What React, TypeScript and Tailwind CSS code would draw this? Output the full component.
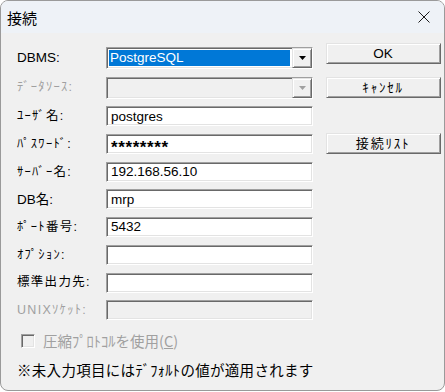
import React from 'react'

const ui = "font-['Liberation_Sans','Noto_Sans_CJK_JP',sans-serif]"
const jp = "font-['Noto_Sans_CJK_JP',sans-serif]"

// classic 3D edges
const sunken =
  'border border-t-[#a0a0a0] border-l-[#a0a0a0] border-b-white border-r-white shadow-[inset_1px_1px_0_#696969,inset_-1px_-1px_0_#e3e3e3]'
const raised =
  'border border-t-[#e3e3e3] border-l-[#e3e3e3] border-b-[#696969] border-r-[#696969] shadow-[inset_1px_1px_0_#ffffff,inset_-1px_-1px_0_#a0a0a0]'

function Label({ text, disabled, kana }: { text: string; disabled?: boolean; kana?: boolean }) {
  return (
    <span
      className={`w-[89px] shrink-0 leading-none ${ui} ${kana ? 'text-[12.5px] tracking-[1.3px]' : 'text-[13.5px]'} ${
        disabled ? 'text-[#a0a0a0]' : 'text-black'
      }`}
    >
      {text}
    </span>
  )
}

function Arrow({ disabled }: { disabled?: boolean }) {
  return (
    <svg width="7" height="4" viewBox="0 0 7 4" aria-hidden="true">
      <path d="M0 0h7L3.5 4z" fill={disabled ? '#a0a0a0' : '#000'} />
    </svg>
  )
}

function Combo({ value, disabled }: { value?: string; disabled?: boolean }) {
  return (
    <div className={`h-[22px] w-[207px] flex ${sunken} ${disabled ? 'bg-[#f0f0f0]' : 'bg-white'}`}>
      <div className="flex-1 p-[2px]">
        {value && (
          <div className={`h-full bg-[#0078d7] text-white text-[13.5px] leading-none flex items-center pl-[1px] ${ui}`}>
            {value}
          </div>
        )}
      </div>
      <div className={`w-[20px] h-full flex items-center justify-center bg-[#f0f0f0] ${raised}`}>
        <Arrow disabled={disabled} />
      </div>
    </div>
  )
}

function Field({ value, disabled, secret }: { value?: string; disabled?: boolean; secret?: boolean }) {
  return (
    <div
      className={`h-[20px] w-[207px] flex items-center pl-[4px] text-black leading-none ${ui} ${sunken} ${
        disabled ? 'bg-[#f0f0f0]' : 'bg-white'
      }`}
    >
      {secret ? (
        <span className="relative top-[3px] text-[17px] font-bold tracking-[0.6px]">{value}</span>
      ) : (
        <span className="text-[13.5px]">{value}</span>
      )}
    </div>
  )
}

function Button({ text, kana }: { text: string; kana?: boolean }) {
  return (
    <div
      className={`h-[21px] w-[115px] flex items-center justify-center bg-[#f0f0f0] text-black leading-none ${ui} ${raised} ${
        kana ? 'text-[13px] tracking-[1.8px]' : 'text-[13.5px]'
      }`}
    >
      {text}
    </div>
  )
}

const rows: { label: string; value?: string; disabled?: boolean; secret?: boolean; kana?: boolean }[] = [
  { label: 'ﾕｰｻﾞ名:', value: 'postgres', kana: true },
  { label: 'ﾊﾟｽﾜｰﾄﾞ:', value: '********', secret: true, kana: true },
  { label: 'ｻｰﾊﾞｰ名:', value: '192.168.56.10', kana: true },
  { label: 'DB名:', value: 'mrp' },
  { label: 'ﾎﾟｰﾄ番号:', value: '5432', kana: true },
  { label: 'ｵﾌﾟｼｮﾝ:', kana: true },
  { label: '標準出力先:', kana: true },
  { label: 'UNIXｿｹｯﾄ:', disabled: true, kana: true },
]

export default function App() {
  return (
    <div className="w-[445px] h-[392px] bg-white">
      <div className="w-[445px] h-[391px] rounded-[8px] border border-[#9a9a9a] overflow-hidden flex flex-col bg-[#f0f0f0]">
        {/* title bar */}
        <div className="h-[32px] shrink-0 bg-[#eef2f7] flex items-center justify-between pl-[6px] pr-[14px]">
          <span className={`text-[15px] leading-none text-black ${jp}`}>接続</span>
          <svg width="12" height="12" viewBox="0 0 12 12" aria-hidden="true">
            <path d="M0.5 0.5l11 11M11.5 0.5l-11 11" stroke="#1a1a1a" strokeWidth="1" />
          </svg>
        </div>

        {/* body */}
        <div className="flex pl-[16px] pt-[10px]">
          <div className="flex flex-col pt-[4px]">
            <div className="flex flex-col gap-[7.7px]">
              <div className="flex items-center">
                <Label text="DBMS:" />
                <Combo value="PostgreSQL" />
              </div>
              <div className="flex items-center">
                <Label text="ﾃﾞｰﾀｿｰｽ:" disabled kana />
                <Combo disabled />
              </div>
              {rows.map((r) => (
                <div key={r.label} className="flex items-center">
                  <Label text={r.label} disabled={r.disabled} kana={r.kana} />
                  <Field value={r.value} disabled={r.disabled} secret={r.secret} />
                </div>
              ))}
            </div>

            {/* compression checkbox */}
            <div className="flex items-center gap-[8px] mt-[14px] pl-[4px]">
              <div className={`w-[14px] h-[14px] bg-[#f0f0f0] ${sunken}`} />
              <span className={`text-[14.5px] leading-none text-[#a0a0a0] ${jp}`}>
                圧縮ﾌﾟﾛﾄｺﾙを使用(<span className="underline">C</span>)
              </span>
            </div>

            <p className={`mt-[14px] text-[14.5px] tracking-[0.3px] leading-none text-black ${jp}`}>
              ※未入力項目にはﾃﾞﾌｫﾙﾄの値が適用されます
            </p>
          </div>

          {/* buttons */}
          <div className="ml-[12px] flex flex-col">
            <Button text="OK" />
            <div className="mt-[13px]">
              <Button text="ｷｬﾝｾﾙ" kana />
            </div>
            <div className="mt-[35px]">
              <Button text="接続ﾘｽﾄ" kana />
            </div>
          </div>
        </div>
      </div>
    </div>
  )
}
